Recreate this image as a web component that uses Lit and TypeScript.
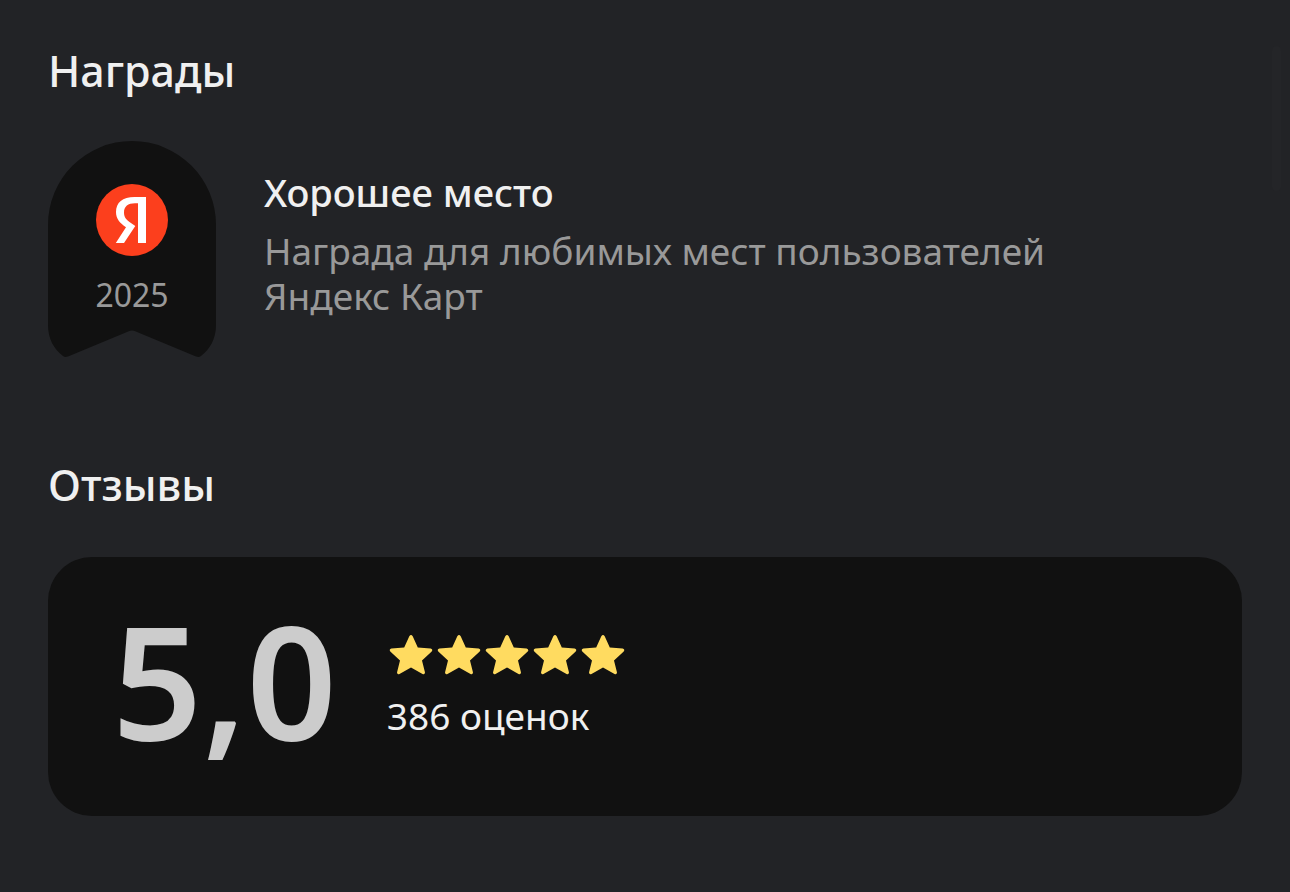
import { LitElement, html, css } from "lit";
import { customElement, property } from "lit/decorators.js";

@customElement("award-badge")
class AwardBadge extends LitElement {
  @property() year = "";

  static styles = css`
    :host {
      display: block;
      flex: none;
    }
    .badge {
      display: grid;
      grid-template: 216px / 168px;
    }
    .shape,
    .content {
      grid-area: 1 / 1;
    }
    .shape {
      width: 168px;
      height: 216px;
    }
    .content {
      display: flex;
      flex-direction: column;
      align-items: center;
      gap: 19px;
      padding-top: 43px;
    }
    .logo {
      width: 72px;
      height: 72px;
    }
    .year {
      font-size: 32px;
      line-height: 40px;
      color: #999999;
    }
  `;

  render() {
    return html`
      <div class="badge">
        <svg class="shape" viewBox="0 0 168 216" aria-hidden="true">
          <path
            fill="#111111"
            d="M0 84A84 84 0 0 1 168 84V184C168 198 162 208 153 215Q151 216.500 148 215.500L86 189.800Q84 189 82 189.800L20 215.500Q17 216.500 15 215C6 208 0 198 0 184Z"
          />
        </svg>
        <div class="content">
          <svg class="logo" viewBox="0 0 72 72" role="img" aria-label="Яндекс">
            <circle cx="36" cy="36" r="36" fill="#fc3f1d" />
            <path
              fill="#ffffff"
              d="M50 13V59H42V19.300H39C32 19.300 28 22.500 28 28.500C28 33 30 35.500 33.500 38L39.300 42L28 59H19.800L30 43.200C24 39 20 35 20 28C20 18.500 26.500 13 38.500 13Z"
            />
          </svg>
          <span class="year">${this.year}</span>
        </div>
      </div>
    `;
  }
}

@customElement("star-rating")
class StarRating extends LitElement {
  @property({ type: Number }) value = 0;

  static styles = css`
    :host {
      display: flex;
    }
    .star {
      width: 48px;
      height: 48px;
    }
  `;

  render() {
    return Array.from(
      { length: this.value },
      () => html`
        <svg class="star" viewBox="0 0 48 48" aria-hidden="true">
          <path
            fill="#ffdb60"
            d="M22.300 4.200Q24 1.800 25.700 4.200L30.800 15.600L43.600 16.600Q46.300 17.600 44.700 19.600L35 28.600L38 40.500Q37.800 42.900 35.500 42L24 35.400L12.500 42Q10.200 42.900 10 40.500L13 28.600L3.300 19.600Q1.700 17.600 4.400 16.600L17.200 15.600Z"
          />
        </svg>
      `
    );
  }
}

@customElement("app-root")
class AppRoot extends LitElement {
  static styles = css`
    :host {
      display: block;
      position: relative;
      box-sizing: border-box;
      min-height: 100vh;
      padding: 41px 48px 76px;
      background: #222326;
      color: #f0f0f0;
      font-family: "Noto Sans", sans-serif;
    }
    .heading {
      margin: 0;
      font-size: 43px;
      line-height: 60px;
      font-weight: 500;
    }
    .award {
      display: flex;
      align-items: flex-start;
      gap: 48px;
      margin: 40px 0 98px;
    }
    .info {
      padding-top: 27px;
      max-width: 840px;
    }
    .title {
      margin: 0 0 12px;
      font-size: 38px;
      line-height: 48px;
      font-weight: 500;
    }
    .text {
      margin: 0;
      font-size: 37px;
      line-height: 45px;
      color: #999999;
    }
    .card {
      display: flex;
      align-items: center;
      gap: 50px;
      box-sizing: border-box;
      min-height: 259px;
      margin-top: 42px;
      padding: 0 64px 2px;
      border-radius: 44px;
      background: #111111;
    }
    .score {
      padding-bottom: 14px;
      font-size: 158px;
      line-height: 180px;
      font-weight: 600;
      color: #cccccc;
    }
    .count {
      margin: 12px 0 0;
      font-size: 37px;
      line-height: 48px;
    }
    .thumb {
      position: absolute;
      top: 46px;
      right: 9px;
      width: 9px;
      height: 145px;
      border-radius: 5px;
      background: #242528;
    }
  `;

  render() {
    return html`
      <section>
        <h2 class="heading">Награды</h2>
        <div class="award">
          <award-badge year="2025"></award-badge>
          <div class="info">
            <h3 class="title">Хорошее место</h3>
            <p class="text">Награда для любимых мест пользователей Яндекс Карт</p>
          </div>
        </div>
      </section>
      <section>
        <h2 class="heading">Отзывы</h2>
        <div class="card">
          <div class="score">5,0</div>
          <div>
            <star-rating value="5"></star-rating>
            <p class="count">386 оценок</p>
          </div>
        </div>
      </section>
      <div class="thumb"></div>
    `;
  }
}
